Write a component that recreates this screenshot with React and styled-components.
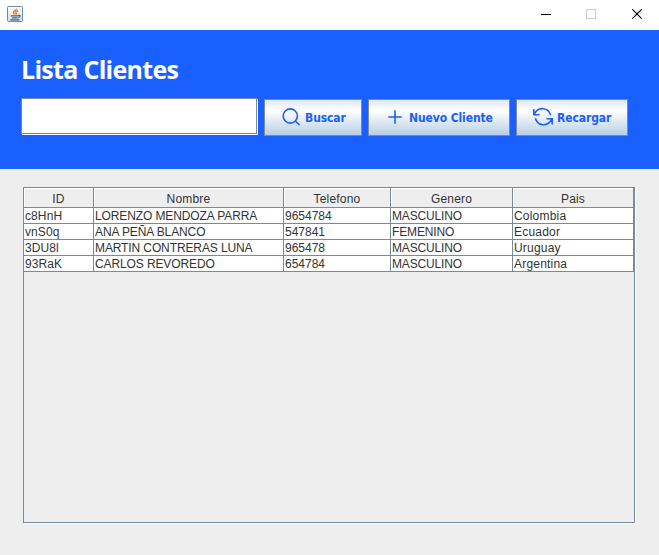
import React from "react";
import styled, { createGlobalStyle } from "styled-components";

const line = "#7a8a99";

const GlobalStyle = createGlobalStyle`
  * { box-sizing: border-box; }
  body { margin: 0; background: #eeeeee; }
`;

const Window = styled.div`
  display: flex;
  flex-direction: column;
  width: 659px;
  height: 555px;
  background: #eeeeee;
  overflow: hidden;
  font-family: "Liberation Sans", Arial, sans-serif;
`;

const TitleBar = styled.div`
  display: flex;
  justify-content: space-between;
  height: 30px;
  padding-left: 7px;
  background: #fff;
  svg { display: block; flex: none; }
`;

const AppIcon = styled.svg`
  margin-top: 6px;
`;

const WindowControls = styled.div`
  display: flex;
`;

const ControlButton = styled.button`
  display: flex;
  align-items: flex-start;
  width: ${(p) => p.$width || 46}px;
  height: 30px;
  padding: 9px 0 0 18px;
  border: 0;
  background: none;
`;

const Header = styled.header`
  height: 139px;
  padding: 23px 0 0 21px;
  background: #1a5fff;
`;

const Title = styled.h1`
  margin: 0 0 12px;
  height: 33px;
  font: 700 25px/33px "Open Sans", "Noto Sans", sans-serif;
  letter-spacing: -0.7px;
  color: #fff;
  white-space: nowrap;
`;

const Toolbar = styled.div`
  display: flex;
  gap: 6px;
`;

const SearchInput = styled.input`
  width: 236px;
  height: 36px;
  margin-right: 1px;
  padding: 0 6px;
  border: 1px solid ${line};
  border-radius: 0;
  background: #fff;
  box-shadow: 1px 1px 0 #fff;
  outline: none;
`;

const ActionButton = styled.button`
  display: flex;
  align-items: center;
  width: ${(p) => p.$width}px;
  height: 37px;
  margin-top: 1px;
  padding: 0 0 0 16px;
  border: 1px solid ${line};
  background: linear-gradient(#dde8f3 0%, #ffffff 30%, #b8cfe5 100%);
  color: #1a5fff;
  svg { flex: none; display: block; margin-bottom: 2px; }
`;

const ButtonLabel = styled.span`
  margin-left: 4px;
  font: 700 12px/16px "DejaVu Sans Condensed", "Noto Sans", sans-serif;
  letter-spacing: -0.1px;
  white-space: nowrap;
`;

const TablePanel = styled.div`
  width: 612px;
  height: 336px;
  margin: 18px 0 0 23px;
  border: 1px solid ${line};
  box-shadow: 1px 1px 0 #fff;
`;

const Row = styled.div`
  display: grid;
  grid-template-columns: 70px 190px 107px 122px 121px;
`;

const HeadCell = styled.div`
  height: 20px;
  border: solid ${line};
  border-width: 0 1px 1px 0;
  box-shadow: inset 1px 1px 0 #fff;
  font-size: 12px;
  line-height: 22px;
  letter-spacing: 0.2px;
  text-align: center;
  color: #333;
`;

const Cell = styled.div`
  height: 16px;
  padding-left: 1px;
  border: solid ${line};
  border-width: 0 1px 1px 0;
  background: #fff;
  font-size: 12px;
  line-height: 16px;
  letter-spacing: ${(p) => p.$tracking}px;
  white-space: nowrap;
  color: #333;
`;

const columns = [
  { name: "ID", tracking: 0.1 },
  { name: "Nombre", tracking: -0.11 },
  { name: "Telefono", tracking: 0 },
  { name: "Genero", tracking: -0.15 },
  { name: "Pais", tracking: 0.2 },
];

const clients = [
  ["c8HnH", "LORENZO MENDOZA PARRA", "9654784", "MASCULINO", "Colombia"],
  ["vnS0q", "ANA PEÑA BLANCO", "547841", "FEMENINO", "Ecuador"],
  ["3DU8l", "MARTIN CONTRERAS LUNA", "965478", "MASCULINO", "Uruguay"],
  ["93RaK", "CARLOS REVOREDO", "654784", "MASCULINO", "Argentina"],
];

const JavaIcon = () => (
  <AppIcon width="16" height="16" viewBox="0 0 16 16" fill="none">
    <defs>
      <linearGradient id="tile" x1="0" y1="0" x2="0" y2="1">
        <stop offset="0" stopColor="#fff" />
        <stop offset="1" stopColor="#d5dde3" />
      </linearGradient>
    </defs>
    <rect x=".5" y=".5" width="15" height="15" rx="1" fill="url(#tile)" stroke="#71899b" />
    <path d="M9.5 2.6C9.6 4.4 5.9 4.9 6.4 6.6c.2.7 1.1 1 1.1 2M11 4.7c-2.2.8-2.6 1.5-1.9 2.3.4.6.1 1.1-.4 1.7" stroke="#ee7d20" strokeWidth="1.5" />
    <path d="M3.8 9.9h7.4M5 11.9h5.5M11 9.3h1.6c1.2.2.7 1.8-1.4 2.3M3.2 13.8h9.2" stroke="#3f6a8a" strokeWidth="1.2" />
  </AppIcon>
);

const SearchIcon = () => (
  <svg width="20" height="20" viewBox="0 0 20 20" fill="none" stroke="#1a5fff" strokeWidth="1.6">
    <circle cx="9.3" cy="9" r="7.1" />
    <path d="M14.3 14.2 18.6 18" />
  </svg>
);

const PlusIcon = () => (
  <svg width="20" height="20" viewBox="0 0 20 20" fill="none" stroke="#1a5fff" strokeWidth="1.6">
    <path d="M10 3.2v13.6M3.3 10h13.4" />
  </svg>
);

const ReloadIcon = () => (
  <svg width="20" height="20" viewBox="0 0 20 20" fill="none" stroke="#1a5fff" strokeWidth="1.6">
    <path d="M.8 2v5.7h5.7M1 7.5C3.2 3.1 6.6 1.4 10.3 1.7c3.8.4 6.4 3 7.3 6.5M19.2 17.4v-5.7h-5.7M19 11.9c-2.2 4.4-5.6 6.1-9.3 5.8-3.8-.4-6.4-3-7.3-6.5" />
  </svg>
);

export default function App() {
  return (
    <Window>
      <GlobalStyle />
      <TitleBar>
        <JavaIcon />
        <WindowControls>
          <ControlButton $width={45} aria-label="Minimizar">
            <svg width="11" height="11" shapeRendering="crispEdges"><path d="M0 5.5h10" stroke="#000" /></svg>
          </ControlButton>
          <ControlButton aria-label="Maximizar">
            <svg width="11" height="11"><rect x=".5" y=".5" width="9" height="9" fill="none" stroke="#ccc" /></svg>
          </ControlButton>
          <ControlButton $width={45} aria-label="Cerrar">
            <svg width="11" height="11"><path d="M.3.3l9.4 9.4M9.7.3.3 9.7" stroke="#000" strokeWidth="1.1" /></svg>
          </ControlButton>
        </WindowControls>
      </TitleBar>
      <Header>
        <Title>Lista Clientes</Title>
        <Toolbar>
          <SearchInput aria-label="Buscar cliente" />
          <ActionButton $width={98}>
            <SearchIcon />
            <ButtonLabel>Buscar</ButtonLabel>
          </ActionButton>
          <ActionButton $width={142}>
            <PlusIcon />
            <ButtonLabel>Nuevo Cliente</ButtonLabel>
          </ActionButton>
          <ActionButton $width={112}>
            <ReloadIcon />
            <ButtonLabel>Recargar</ButtonLabel>
          </ActionButton>
        </Toolbar>
      </Header>
      <TablePanel>
        <Row>
          {columns.map(({ name }) => <HeadCell key={name}>{name}</HeadCell>)}
        </Row>
        {clients.map((client) => (
          <Row key={client[0]}>
            {client.map((value, i) => (
              <Cell key={columns[i].name} $tracking={columns[i].tracking}>{value}</Cell>
            ))}
          </Row>
        ))}
      </TablePanel>
    </Window>
  );
}
